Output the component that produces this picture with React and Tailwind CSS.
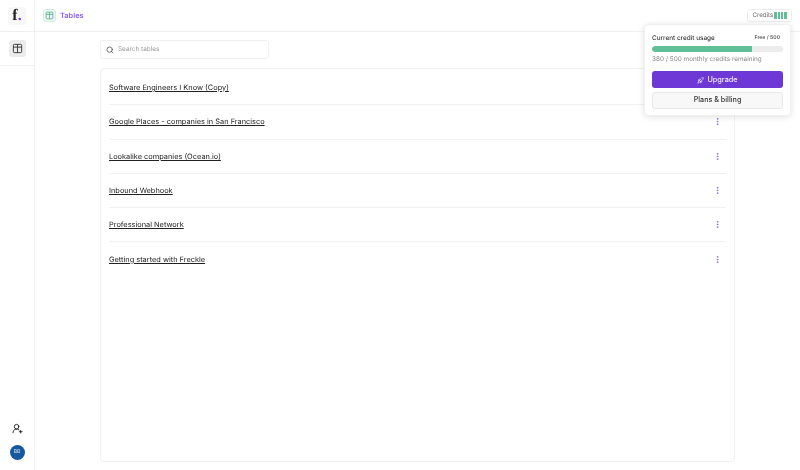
import { EllipsisVertical, Rocket, Search, UserRoundPlus } from 'lucide-react';

const tables = [
  'Software Engineers I Know (Copy)',
  'Google Places - companies in San Francisco',
  'Lookalike companies (Ocean.io)',
  'Inbound Webhook',
  'Professional Network',
  'Getting started with Freckle',
];

// header row plus a centre split, lucide has no exact match
const TableIcon = ({ className }) => (
  <svg viewBox="0 0 24 24" fill="none" stroke="currentColor" strokeWidth="2" className={className}>
    <rect x="3" y="3" width="18" height="18" rx="2" />
    <path d="M3 9h18M12 3v18" />
  </svg>
);

const Sidebar = () => (
  <aside className="flex h-full w-[35px] shrink-0 flex-col border-r border-[#f0f0f0]">
    <div className="flex h-[32px] shrink-0 items-center justify-center border-b border-[#f0f0f0]">
      <div className="flex h-[18px] w-[18px] items-center justify-center rounded-[3px] bg-[#f7f7f7] font-['Liberation_Serif',serif] text-[16px] font-bold leading-none text-[#222]">
        f<span className="text-[#7c3aed]">.</span>
      </div>
    </div>
    <div className="flex h-[34px] shrink-0 items-center justify-center border-b border-[#f0f0f0]">
      <div className="flex h-[17px] w-[17px] items-center justify-center rounded-[3px] bg-[#ececec]">
        <TableIcon className="h-[11px] w-[11px] text-[#333]" />
      </div>
    </div>
    <div className="mt-auto flex flex-col items-center gap-[11px] pb-[10px]">
      <UserRoundPlus className="h-[11px] w-[11px] text-[#222]" />
      <div className="flex h-[15px] w-[15px] items-center justify-center rounded-full bg-[#15589f] text-[5px] font-medium text-white/80">
        BB
      </div>
    </div>
  </aside>
);

const TableRow = ({ name, last }) => (
  <div className={`flex h-[34.3px] items-center justify-between ${last ? '' : 'border-b border-[#f1f1f1]'}`}>
    <a className="text-[7.4px] leading-none text-[#222] underline">{name}</a>
    <EllipsisVertical className="mr-[4px] h-[9px] w-[9px] text-[#7c5cc4]" />
  </div>
);

const CreditsPopover = () => (
  <div className="absolute right-[9px] top-[24px] w-[147px] rounded-[4px] border border-[#f0f0f0] bg-white px-[7px] pb-[6px] pt-[9px] shadow-[0_1px_6px_rgba(0,0,0,0.12)]">
    <div className="flex items-center justify-between pr-[3px]">
      <span className="text-[6.4px] font-medium leading-[8px] text-[#333]">Current credit usage</span>
      <span className="text-[5.2px] font-medium leading-[8px] text-[#444]">Free / 500</span>
    </div>
    <div className="mt-[4px] h-[6px] w-full overflow-hidden rounded-full bg-[#ececec]">
      <div className="h-full rounded-l-full bg-[#5fbf96]" style={{ width: `${(380 / 500) * 100}%` }} />
    </div>
    <p className="mt-[3px] text-[6.4px] leading-[8px] text-[#888]">380 / 500 monthly credits remaining</p>
    <button type="button" className="mt-[8px] flex h-[17px] w-full items-center justify-center gap-[3px] rounded-[3px] bg-[#6d38d6] pt-[1px] text-[7.3px] font-medium text-white/90">
      <Rocket className="h-[7px] w-[7px]" />
      Upgrade
    </button>
    <button type="button" className="mt-[4px] flex h-[17px] w-full items-center justify-center rounded-[3px] border border-[#e8e8e8] bg-[#f8f8f8] text-[7.2px] font-medium text-[#333]">
      Plans &amp; billing
    </button>
  </div>
);

const App = () => (
  <div className="relative flex h-[470px] w-[800px] overflow-hidden font-['Inter',sans-serif] [text-rendering:geometricPrecision] [will-change:transform]">
    <Sidebar />
    <div className="flex min-w-0 flex-1 flex-col">
      <header className="flex h-[32px] shrink-0 items-center justify-between border-b border-[#f0f0f0] pl-[8px] pr-[8px]">
        <div className="flex items-center gap-[4px]">
          <div className="flex h-[13px] w-[13px] items-center justify-center rounded-[3px] border border-[#cdeee0] bg-[#eefaf5]">
            <TableIcon className="h-[9px] w-[9px] text-[#4fa583]" />
          </div>
          <span className="text-[7.4px] font-semibold text-[#8b5cf6]">Tables</span>
        </div>
        <div className="flex h-[13px] w-[45px] items-center justify-center gap-[1px] rounded-[3px] border border-[#ececec] text-[6.2px] text-[#666]">
          Credits
          <span className="flex gap-[0.75px]">
            <i className="h-[7px] w-[2.5px] bg-[#5fbf96]" />
            <i className="h-[7px] w-[2.5px] bg-[#5fbf96]" />
            <i className="h-[7px] w-[2.5px] bg-[#5fbf96]" />
            <i className="h-[7px] w-[2.5px] bg-[#5fbf96]" />
          </span>
        </div>
      </header>
      <main className="flex min-h-0 flex-1 flex-col pb-[8px] pl-[65px] pr-[65px] pt-[8px]">
        <div className="flex h-[19px] w-[169px] items-center gap-[4px] rounded-[3px] border border-[#f0f0f0] px-[5px]">
          <Search className="h-[8px] w-[8px] text-[#333]" />
          <span className="pt-[1px] text-[6.4px] text-[#999]">Search tables</span>
        </div>
        <div className="mt-[9px] flex-1 rounded-[4px] border border-[#f0f0f0] px-[8px] pt-[2px]">
          {tables.map((name, i) => (
            <TableRow key={name} name={name} last={i === tables.length - 1} />
          ))}
        </div>
      </main>
    </div>
    <CreditsPopover />
  </div>
);

export default App;
